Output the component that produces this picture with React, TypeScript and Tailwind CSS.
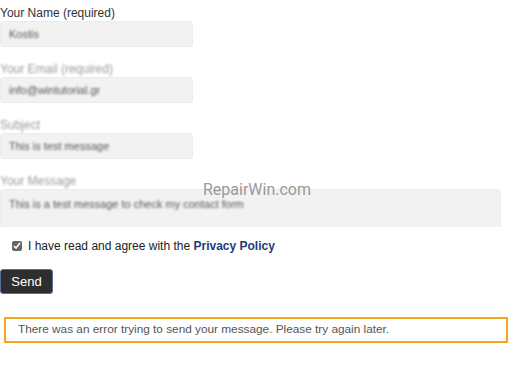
export default function App() {
  const fields = [
    { label: "Your Email (required)", value: "info@wintutorial.gr" },
    { label: "Subject", value: "This is test message" },
  ];
  return (
    <div className="relative w-[517px] h-[379px] bg-white overflow-hidden pt-[5px] text-[12px] text-[#333]" style={{ fontFamily: '"Liberation Sans", Arial, sans-serif' }}>
      <div className="leading-[16px]">Your Name (required)</div>
      <div className="w-[193px] h-[26px] rounded-[3px] bg-[#f2f2f2] border border-[#ececec] flex items-center pl-[8px]">
        <span className="blur-[1.3px] text-[#555] text-[11px]">Kostis</span>
      </div>

      {fields.map((f) => (
        <div key={f.label} className="mt-[14px]">
          <div className="leading-[16px] blur-[1.3px] text-[#9a9a9a]">{f.label}</div>
          <div className="w-[193px] h-[26px] rounded-[3px] bg-[#f2f2f2] border border-[#ececec] flex items-center pl-[8px]">
            <span className="blur-[1.2px] text-[#555] text-[11px]">{f.value}</span>
          </div>
        </div>
      ))}

      <div className="mt-[14px]">
        <div className="leading-[16px] blur-[1.3px] text-[#9a9a9a]">Your Message</div>
        <div className="w-[501px] h-[38px] rounded-t-[4px] bg-[#f2f2f2] border-t border-x border-[#ececec] pl-[8px] pt-[5px]">
          <span className="blur-[1.2px] text-[#555] text-[11px]">This is a test message to check my contact form</span>
        </div>
      </div>

      <div className="mt-[11px] flex items-center h-[16px] pl-[12px] gap-[6px]">
        <input type="checkbox" defaultChecked className="w-[10px] h-[10px] m-0 accent-[#666]" />
        <span className="text-[#222] text-[12px] leading-[16px]">
          I have read and agree with the <span className="font-bold text-[#1d3c78]">Privacy Policy</span>
        </span>
      </div>

      <button className="mt-[15px] w-[53px] h-[25px] rounded-[3px] bg-[#2e2e2e] border border-[#5b6e9a] text-white text-[13px] flex items-center justify-center">
        Send
      </button>

      <div className="mt-[23px] ml-[4px] w-[504px] h-[26px] border-2 border-[#f5a41f] flex items-center pl-[12px] text-[11.8px] text-[#555]">
        There was an error trying to send your message. Please try again later.
      </div>

      <div className="absolute left-[203px] top-[178px] text-[16px] text-[#999]" style={{ fontFamily: "Roboto, sans-serif" }}>
        RepairWin.com
      </div>
    </div>
  );
}
